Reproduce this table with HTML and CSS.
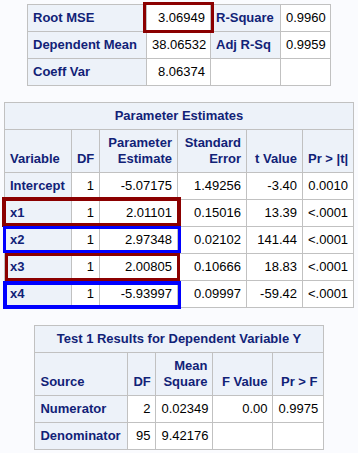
FILE: index.html
```html
<!DOCTYPE html>
<html>
<head>
<meta charset="utf-8">
<link rel="stylesheet" href="styles.css">
</head>
<body>
<div class="page">
  <div class="wrap">
    <table class="t-fit">
      <colgroup><col class="w119"><col class="w64"><col class="w70"><col class="w50"></colgroup>
      <tr><th class="rh">Root MSE</th><td>3.06949</td><th class="rh">R-Square</th><td>0.9960</td></tr>
      <tr><th class="rh">Dependent Mean</th><td>38.06532</td><th class="rh">Adj R-Sq</th><td>0.9959</td></tr>
      <tr><th class="rh">Coeff Var</th><td>8.06374</td><td></td><td></td></tr>
    </table>
    <div class="hl red hl-rmse"></div>
  </div>

  <div class="wrap gap1">
    <table class="t-par">
      <colgroup><col class="w67"><col class="w28"><col class="w78"><col class="w69"><col class="w56"><col class="w51"></colgroup>
      <tr><th class="title" colspan="6">Parameter Estimates</th></tr>
      <tr>
        <th class="ch left">Variable</th>
        <th class="ch">DF</th>
        <th class="ch">Parameter<br>Estimate</th>
        <th class="ch">Standard<br>Error</th>
        <th class="ch">t Value</th>
        <th class="ch">Pr &gt; |t|</th>
      </tr>
      <tr><th class="rh">Intercept</th><td>1</td><td>-5.07175</td><td>1.49256</td><td>-3.40</td><td>0.0010</td></tr>
      <tr><th class="rh">x1</th><td>1</td><td>2.01101</td><td>0.15016</td><td>13.39</td><td>&lt;.0001</td></tr>
      <tr><th class="rh">x2</th><td>1</td><td>2.97348</td><td>0.02102</td><td>141.44</td><td>&lt;.0001</td></tr>
      <tr><th class="rh">x3</th><td>1</td><td>2.00805</td><td>0.10666</td><td>18.83</td><td>&lt;.0001</td></tr>
      <tr><th class="rh">x4</th><td>1</td><td>-5.93997</td><td>0.09997</td><td>-59.42</td><td>&lt;.0001</td></tr>
    </table>
    <div class="hl red hl-x1"></div>
    <div class="hl blue hl-x2"></div>
    <div class="hl red hl-x3"></div>
    <div class="hl blue hl-x4"></div>
  </div>

  <div class="wrap gap2">
    <table class="t-test">
      <colgroup><col class="w93"><col class="w28"><col class="w57"><col class="w60"><col class="w50"></colgroup>
      <tr><th class="title" colspan="5">Test 1 Results for Dependent Variable Y</th></tr>
      <tr>
        <th class="ch left">Source</th>
        <th class="ch">DF</th>
        <th class="ch">Mean<br>Square</th>
        <th class="ch">F Value</th>
        <th class="ch">Pr &gt; F</th>
      </tr>
      <tr><th class="rh">Numerator</th><td>2</td><td>0.02349</td><td>0.00</td><td>0.9975</td></tr>
      <tr><th class="rh">Denominator</th><td>95</td><td>9.42176</td><td></td><td></td></tr>
    </table>
  </div>
</div>
</body>
</html>
```

FILE: styles.css
```css
html, body {
  margin: 0;
  padding: 0;
  background: #fafbfe;
}

body {
  font-family: "Liberation Sans", Arial, sans-serif;
  font-size: 13px;
  color: #000;
}

.page {
  display: flex;
  flex-direction: column;
  align-items: center;
  padding-top: 4px;
}

.wrap {
  position: relative;
}

.gap1 {
  margin-top: 16px;
}

.gap2 {
  margin-top: 17px;
}

table {
  border-collapse: collapse;
  table-layout: fixed;
  background: #fff;
}

.t-fit { width: 304px; }
.t-par { width: 350px; }
.t-test { width: 289px; }

.w119 { width: 119px; }
.w64 { width: 64px; }
.w70 { width: 70px; }
.w50 { width: 50px; }
.w67 { width: 67px; }
.w28 { width: 28px; }
.w78 { width: 78px; }
.w69 { width: 69px; }
.w56 { width: 56px; }
.w51 { width: 51px; }
.w93 { width: 93px; }
.w57 { width: 57px; }
.w60 { width: 60px; }

th, td {
  border: 1px solid #c1c1c1;
  padding: 5px 5px;
  line-height: 16px;
  white-space: nowrap;
  overflow: hidden;
}

td {
  text-align: right;
  background: #fff;
  color: #000;
  font-weight: normal;
}

th {
  background: #edf2f9;
  color: #112277;
  font-weight: bold;
}

th.rh {
  text-align: left;
}

th.title {
  text-align: center;
}

th.ch {
  text-align: right;
  vertical-align: bottom;
}

th.ch.left {
  text-align: left;
}

.hl {
  position: absolute;
  box-sizing: border-box;
  border: 3px solid;
  pointer-events: none;
}

.red { border-color: #8b0000; }
.blue { border-color: #0000ff; }

.hl-rmse { left: 116px; top: -2px; width: 71px; height: 31px; }
.hl-x1 { left: -2px; top: 95px; width: 179px; height: 30px; border-width: 4px; }
.hl-x2 { left: -1px; top: 124px; width: 178px; height: 27px; }
.hl-x3 { left: 1px; top: 151px; width: 175px; height: 28px; }
.hl-x4 { left: -1px; top: 179px; width: 178px; height: 28px; border-width: 4px 3px 4px 4px; }
```
